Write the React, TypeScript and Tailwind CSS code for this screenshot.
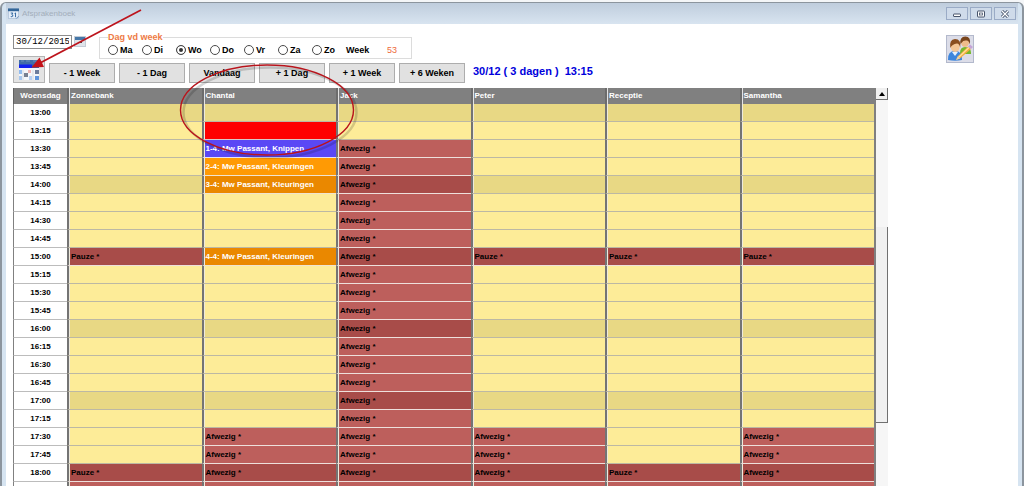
import { useState } from 'react'
import clsx from 'clsx'

type Kind = 'away' | 'break' | 'selected' | 'cut' | 'color' | 'colorDark'

interface Slot {
  kind: Kind
  text: string
}

const DAYS = ['Ma', 'Di', 'Wo', 'Do', 'Vr', 'Za', 'Zo']
const STEPS = ['- 1 Week', '- 1 Dag', 'Vandaag', '+ 1 Dag', '+ 1 Week', '+ 6 Weken']
const STAFF = ['Zonnebank', 'Chantal', 'Jack', 'Peter', 'Receptie', 'Samantha']

// Quarter-hour slots from 13:00 up to and including 18:15
const TIMES = Array.from({ length: 22 }, (_, i) => {
  const minutes = 13 * 60 + i * 15
  return `${Math.floor(minutes / 60)}:${String(minutes % 60).padStart(2, '0')}`
})

const APPOINTMENTS: Record<string, Slot> = {
  '13:15': { kind: 'selected', text: '' },
  '13:30': { kind: 'cut', text: '1-4: Mw Passant, Knippen' },
  '13:45': { kind: 'color', text: '2-4: Mw Passant, Kleuringen' },
  '14:00': { kind: 'colorDark', text: '3-4: Mw Passant, Kleuringen' },
  '15:00': { kind: 'colorDark', text: '4-4: Mw Passant, Kleuringen' },
}

const KIND_CLASS: Record<Kind, string> = {
  away: 'bg-[#bd5f5c] text-black border-b-[#eee0dc]',
  break: 'bg-[#a84c49] text-black border-b-[#eee0dc]',
  selected: 'bg-[#ff0000] text-white border-b-[#d8c8c8]',
  cut: 'bg-[#5a48f5] text-white border-b-[#e8e4f4]',
  color: 'bg-[#ff9a04] text-white border-b-[#f0e4d0]',
  colorDark: 'bg-[#ea8800] text-white border-b-[#f0e4d0]',
}

function getSlot(person: string, time: string): Slot | null {
  if (person === 'Chantal' && APPOINTMENTS[time]) return APPOINTMENTS[time]
  const onHour = time.endsWith(':00')
  const away: Slot = { kind: onHour ? 'break' : 'away', text: 'Afwezig *' }
  if (person === 'Jack') return time >= '13:30' ? away : null
  if (time === '15:00') return { kind: 'break', text: 'Pauze *' }
  if (person === 'Zonnebank' || person === 'Receptie') {
    if (time === '18:00') return { kind: 'break', text: 'Pauze *' }
    return time > '18:00' ? away : null
  }
  return time >= '17:30' ? away : null
}

function CalendarIcon({ className }: { className?: string }) {
  return (
    <svg viewBox="0 0 12 12" className={className} aria-hidden="true">
      <rect x="0.5" y="1" width="11" height="10.5" fill="#e4edf8" stroke="#9fb6d0" strokeWidth="0.6" />
      <rect x="0" y="0.5" width="12" height="3" fill="#336699" />
      <path d="M3 5.5h2.3L4.2 7.2q1.6.2 1 1.7-.7 1-2.2.4M7.2 6l1-.6V10" fill="none" stroke="#28609c" strokeWidth="1" />
      <path d="M9 11.5 11.5 9" stroke="#5f86b4" strokeWidth="1" />
    </svg>
  )
}

function PlannerIcon() {
  return (
    <svg viewBox="0 0 22 22" className="h-[22px] w-[22px]" aria-hidden="true">
      <rect x="1" y="9" width="20" height="12" fill="#f4f6fa" />
      <rect x="1" y="1" width="20" height="6" fill="#426ea8" />
      <path d="M3 2h3M8 2h4M15 2h4" stroke="#6d91bd" strokeWidth="1" />
      <rect x="1" y="5.5" width="13" height="3.5" fill="#1222f0" />
      <rect x="14" y="5.5" width="7" height="3.5" fill="#365f9c" />
      <rect x="1" y="11" width="3" height="4" fill="#91bbee" />
      <rect x="1" y="17" width="3" height="4" fill="#a8c7ee" />
      <rect x="6" y="14" width="4" height="4" fill="#777f91" />
      <rect x="10" y="11" width="3" height="3" fill="#f1b4b4" />
      <rect x="11" y="17" width="3" height="4" fill="#b8d0f1" />
      <rect x="17" y="11" width="4" height="4" fill="#6c7c9c" />
      <rect x="17" y="17" width="4" height="4" fill="#6095dc" />
      <path d="M5 11v10M15 11v10" stroke="#d3d9e3" strokeWidth="1" />
    </svg>
  )
}

function CustomersIcon() {
  return (
    <svg viewBox="0 0 26 26" className="h-[26px] w-[26px]" aria-hidden="true">
      <path d="M13 17q0-6 5-6 6 0 6 6v1H13z" fill="#76b82d" />
      <ellipse cx="18" cy="6.5" rx="4" ry="4.5" fill="#efbc8b" />
      <path d="M13.3 8q-.7-7.5 5-7.5 6 0 4.5 8-1-4-3-4-4-.5-4.5 1.5z" fill="#79451c" />
      <path d="M1 24q-.5-9 7-9 7.5 0 7 9-7 1.5-14 0z" fill="#3e86dc" />
      <path d="M5 16l3 4 3-4z" fill="#e4f1ff" />
      <ellipse cx="8.2" cy="10.5" rx="4.5" ry="5.5" fill="#f4c797" />
      <path d="M3.3 12Q2 3.5 8 3q6.5 0 5.2 9-.7-4.5-3.2-4.5-5 .5-6.7 4.5z" fill="#8a4f20" />
      <path d="M9 24l2-4L21 10.5l3 2.5L13 22.5z" fill="#f5ae42" />
      <path d="M12 21 22 11.5" stroke="#ffe2a0" strokeWidth="1.2" />
      <path d="M21 10.5 23 8.5l3 2.5-2 2z" fill="#c5a5d8" />
      <path d="M9 24l2-4 2 2.5z" fill="#e9d2b0" />
    </svg>
  )
}

function TitleBar() {
  const button =
    'flex h-[13px] w-[22px] items-center justify-center border border-[#9aabc6] bg-[#cfdbea] text-[#46536a]'
  return (
    <header className="flex h-[21px] items-center justify-between bg-linear-to-b from-[#bfcddd] to-[#d8e4f0] px-[2px]">
      <div className="flex items-center gap-[3px]">
        <CalendarIcon className="h-[11px] w-[11px]" />
        <h1 className="text-[8px] leading-3 text-[#a3aebb]">Afsprakenboek</h1>
      </div>
      <div className="flex gap-[2px]">
        <button type="button" aria-label="Minimaliseren" className={button}>
          <svg viewBox="0 0 10 8" className="h-2 w-[10px]">
            <rect x="1.5" y="4" width="7" height="2.5" rx="0.5" fill="#fff" stroke="currentColor" />
          </svg>
        </button>
        <button type="button" aria-label="Maximaliseren" className={button}>
          <svg viewBox="0 0 10 8" className="h-2 w-[10px]">
            <rect x="1.5" y="1" width="7" height="6" rx="0.5" fill="#fff" stroke="currentColor" />
            <rect x="3.5" y="3" width="3" height="2" fill="#fff" stroke="currentColor" strokeWidth="0.8" />
          </svg>
        </button>
        <button type="button" aria-label="Sluiten" className={button}>
          <svg viewBox="0 0 10 8" className="h-2 w-[10px]">
            <path d="M2 1l6 6M8 1L2 7" stroke="currentColor" strokeWidth="3" />
            <path d="M2 1l6 6M8 1L2 7" stroke="#fff" strokeWidth="1.2" />
          </svg>
        </button>
      </div>
    </header>
  )
}

function Toolbar() {
  const [day, setDay] = useState('Wo')
  const [date, setDate] = useState('30/12/2015')

  return (
    <div className="flex items-start justify-between pr-11">
      <div>
        <div className="flex items-start">
          <input
            aria-label="Datum"
            value={date}
            onChange={(e) => setDate(e.target.value)}
            className="mt-[3px] h-[14px] w-[59px] border border-[#8d8d8d] bg-white px-[2px] font-['Liberation_Mono',monospace] text-[9px] leading-3 text-black"
          />
          <button
            type="button"
            aria-label="Kalender"
            className="mt-1 ml-[2px] flex h-[11px] w-3 flex-col border border-[#c4ccd6] bg-[#dfe4ea]"
          >
            <span className="h-[3px] w-full bg-[#4577a8]" />
            <span className="mt-[2px] ml-[3px] h-px w-1 bg-[#444]" />
          </button>
          <fieldset className="ml-[13px] flex border border-[#dcdcdc] pr-[14px] pl-2">
            <legend className="text-[9px] leading-[10px] font-bold text-[#ee7a45]">Dag vd week</legend>
            <div className="flex h-4 items-center text-[9px] leading-3 font-bold">
              {DAYS.map((d) => (
                <label key={d} className="flex w-[34px] items-center gap-[2px]">
                  <input
                    type="radio"
                    name="day"
                    checked={day === d}
                    onChange={() => setDay(d)}
                    className="h-[10px] w-[10px] shrink-0 appearance-none rounded-full border border-[#4a4a4a] bg-white checked:bg-[#333] checked:shadow-[inset_0_0_0_2px_#fff]"
                  />
                  {d}
                </label>
              ))}
              <span className="w-[41px]">Week</span>
              <span className="font-normal text-[#ee6a3a]">53</span>
            </div>
          </fieldset>
        </div>
        <div className="-mt-[3px] flex items-end gap-1">
          <button
            type="button"
            aria-label="Planner"
            className="flex h-[27px] w-8 items-center justify-center border border-[#b4b4b4] bg-[#e4e4e4]"
          >
            <PlannerIcon />
          </button>
          {STEPS.map((label) => (
            <button
              key={label}
              type="button"
              className="h-5 w-[66px] border border-[#adadad] bg-[#e1e1e1] text-[9px] leading-3 font-bold"
            >
              {label}
            </button>
          ))}
          <p className="ml-1 text-[11px] leading-6 font-bold whitespace-pre text-[#0000dc]">
            {'30/12 ( 3 dagen )  13:15'}
          </p>
        </div>
      </div>
      <button
        type="button"
        aria-label="Klanten"
        className="mt-[3px] flex h-7 w-7 items-center justify-center border border-[#b3b9cc] bg-[#dcdde8]"
      >
        <CustomersIcon />
      </button>
    </div>
  )
}

function Schedule() {
  return (
    <table className="w-full table-fixed border-separate border-spacing-0 border-r-2 border-[#808080] text-[8px] leading-[10px] font-bold">
      <thead>
        <tr className="h-4 bg-[#808080] text-left text-white">
          <th className="w-[54px] border-l border-[#606060] p-0 text-center">Woensdag</th>
          {STAFF.map((person) => (
            <th
              key={person}
              className="border-l-2 border-[#6c6c6c] py-0 pr-0 pl-[2px] shadow-[inset_1px_0_0_#e4e4e4]"
            >
              {person}
            </th>
          ))}
        </tr>
      </thead>
      <tbody>
        {TIMES.map((time) => (
          <tr key={time} className="h-[18px]">
            <th scope="row" className="border-b border-l border-b-[#bcbcbc] border-l-[#808080] bg-white p-0">
              {time}
            </th>
            {STAFF.map((person) => {
              const slot = getSlot(person, time)
              return (
                <td
                  key={person}
                  className={clsx(
                    'overflow-hidden border-b border-l-2 border-l-[#747474] py-0 pr-0 pl-[2px] whitespace-nowrap shadow-[inset_1px_0_0_#eeeadc]',
                    slot && KIND_CLASS[slot.kind],
                    !slot && 'border-b-[#bcb8a4]',
                    !slot && (time.endsWith(':00') ? 'bg-[#e8d884]' : 'bg-[#fdec98]'),
                  )}
                >
                  {slot?.text}
                </td>
              )
            })}
          </tr>
        ))}
      </tbody>
    </table>
  )
}

function ScrollBar() {
  return (
    <div className="flex w-3 shrink-0 flex-col bg-[#f6f6f6]">
      <button
        type="button"
        aria-label="Omhoog"
        className="flex h-3 w-3 items-center justify-center border-r border-b border-[#707070] bg-[#f0f0f0]"
      >
        <svg viewBox="0 0 6 4" className="h-1 w-[6px]">
          <path d="M0 4 3 0l3 4z" fill="#000" />
        </svg>
      </button>
      <div className="mt-[127px] h-[196px] border-r border-b border-[#707070] bg-[#f0f0f0]" />
    </div>
  )
}

// Red pointer and circle that call out the planner button and the selected slot
function Callouts() {
  return (
    <svg
      viewBox="0 0 380 170"
      className="pointer-events-none absolute top-0 left-0 h-[170px] w-[380px]"
      fill="none"
      aria-hidden="true"
    >
      <ellipse cx="270" cy="112.5" rx="86.5" ry="45" stroke="#000" strokeOpacity="0.16" strokeWidth="2.5" />
      <ellipse cx="267" cy="110" rx="86.5" ry="45" stroke="#b8141c" strokeWidth="1.4" />
      <path d="M141 10 40 63" stroke="#bd141c" strokeWidth="1.7" />
      <path d="M31.5 67.5 39.5 57.5 44 67z" fill="#c4121a" />
    </svg>
  )
}

export default function App() {
  return (
    <div className="relative flex h-screen flex-col overflow-hidden bg-[#f4f6f8] pt-[2px] font-['Liberation_Sans',Arial,sans-serif] text-black">
      <div className="flex min-h-0 flex-1 flex-col overflow-hidden rounded-t-md border-x-2 border-t border-[#8c959e] bg-[#d6e4f1] px-1">
        <TitleBar />
        <main className="min-h-0 flex-1 overflow-hidden bg-white pt-2 pl-[7px]">
          <Toolbar />
          <div className="flex pt-[5px] pr-[130px]">
            <div className="min-w-0 flex-1">
              <Schedule />
            </div>
            <ScrollBar />
          </div>
        </main>
      </div>
      <Callouts />
    </div>
  )
}
